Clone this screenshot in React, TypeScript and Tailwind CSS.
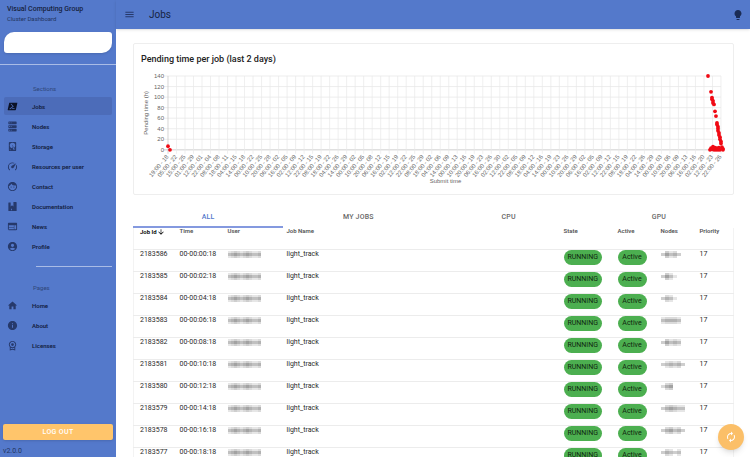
import type { ReactNode } from 'react'
import {
  MdAccountCircle,
  MdArrowDownward,
  MdAutorenew,
  MdFace,
  MdHome,
  MdInfo,
  MdLightbulb,
  MdMenu,
  MdWeb,
} from 'react-icons/md'

function Glyph({ d }: { d: string }) {
  return (
    <svg viewBox="0 0 24 24" fill="currentColor" className="size-full" aria-hidden="true">
      <path d={d} />
    </svg>
  )
}

const GLYPHS = {
  shell:
    'M21.83,4C22.32,4 22.63,4.4 22.5,4.89L19.34,19.11C19.23,19.6 18.75,20 18.26,20H2.17C1.68,20 1.37,19.6 1.5,19.11L4.66,4.89C4.77,4.4 5.25,4 5.74,4H21.83M15.83,16H11.83C11.37,16 11,16.38 11,16.84C11,17.31 11.37,17.69 11.83,17.69H15.83C16.3,17.69 16.68,17.31 16.68,16.84C16.68,16.38 16.3,16 15.83,16M5.78,16.28C5.38,16.56 5.29,17.11 5.57,17.5C5.85,17.92 6.41,18 6.81,17.73C14.16,12.56 14.21,12.5 14.26,12.47C14.44,12.31 14.53,12.09 14.54,11.87C14.55,11.67 14.5,11.5 14.38,11.31L9.46,6.03C9.13,5.67 8.57,5.65 8.21,6C7.85,6.32 7.83,6.88 8.16,7.24L12.31,11.68L5.78,16.28Z',
  server:
    'M4,1H20A1,1 0 0,1 21,2V6A1,1 0 0,1 20,7H4A1,1 0 0,1 3,6V2A1,1 0 0,1 4,1M4,9H20A1,1 0 0,1 21,10V14A1,1 0 0,1 20,15H4A1,1 0 0,1 3,14V10A1,1 0 0,1 4,9M4,17H20A1,1 0 0,1 21,18V22A1,1 0 0,1 20,23H4A1,1 0 0,1 3,22V18A1,1 0 0,1 4,17M9,5H10V3H9V5M9,13H10V11H9V13M9,21H10V19H9V21M5,3V5H7V3H5M5,11V13H7V11H5M5,19V21H7V19H5Z',
  disk: 'M6,2H18A2,2 0 0,1 20,4V20A2,2 0 0,1 18,22H6A2,2 0 0,1 4,20V4A2,2 0 0,1 6,2M12,4A6,6 0 0,0 6,10C6,13.31 8.69,16 12.1,16L11.22,13.77C10.95,13.29 11.11,12.68 11.59,12.4L12.45,11.9C12.93,11.63 13.54,11.79 13.82,12.27L15.74,14.69C17.12,13.59 18,11.9 18,10A6,6 0 0,0 12,4M12,9A1,1 0 0,1 13,10A1,1 0 0,1 12,11A1,1 0 0,1 11,10A1,1 0 0,1 12,9M7,18A1,1 0 0,0 6,19A1,1 0 0,0 7,20A1,1 0 0,0 8,19A1,1 0 0,0 7,18M12.09,13.27L14.58,19.58L17.17,18.08L12.95,12.77L12.09,13.27Z',
  gauge:
    'M12,16A3,3 0 0,1 9,13C9,11.88 9.61,10.9 10.5,10.39L20.21,4.77L14.68,14.35C14.18,15.33 13.17,16 12,16M12,3C13.81,3 15.5,3.5 16.97,4.32L14.87,5.53C14,5.19 13,5 12,5A8,8 0 0,0 4,13C4,15.21 4.89,17.21 6.34,18.65H6.35C6.74,19.04 6.74,19.67 6.35,20.06C5.96,20.45 5.32,20.45 4.93,20.07V20.07C3.12,18.26 2,15.76 2,13A10,10 0 0,1 12,3M22,13C22,15.76 20.88,18.26 19.07,20.07V20.07C18.68,20.45 18.05,20.45 17.66,20.06C17.27,19.67 17.27,19.04 17.66,18.65V18.65C19.11,17.2 20,15.21 20,13C20,12 19.81,11 19.46,10.1L20.67,8C21.5,9.5 22,11.18 22,13Z',
  docs: 'M3,4A1,1 0 0,1 4,3H8V12L11,9L14,12V2H20A1,1 0 0,1 21,3V21A1,1 0 0,1 20,22H4A1,1 0 0,1 3,21V4M9,17V20H11V17H9Z',
  license:
    'M9 10A3.04 3.04 0 0 1 12 7A3.04 3.04 0 0 1 15 10A3.04 3.04 0 0 1 12 13A3.04 3.04 0 0 1 9 10M12 19L16 20V16.92A7.54 7.54 0 0 1 12 18A7.54 7.54 0 0 1 8 16.92V20M12 4A5.78 5.78 0 0 0 7.76 5.74A5.78 5.78 0 0 0 6 10A5.78 5.78 0 0 0 7.76 14.23A5.78 5.78 0 0 0 12 16A5.78 5.78 0 0 0 16.24 14.23A5.78 5.78 0 0 0 18 10A5.78 5.78 0 0 0 16.24 5.74A5.78 5.78 0 0 0 12 4M20 10A8.04 8.04 0 0 1 19.43 12.8A7.84 7.84 0 0 1 18 15.28V23L12 21L6 23V15.28A7.9 7.9 0 0 1 4 10A7.68 7.68 0 0 1 6.33 4.36A7.73 7.73 0 0 1 12 2A7.73 7.73 0 0 1 17.67 4.36A7.68 7.68 0 0 1 20 10Z',
}

type NavItem = { label: string; icon: ReactNode; active?: boolean }

const SECTIONS: NavItem[] = [
  { label: 'Jobs', icon: <Glyph d={GLYPHS.shell} />, active: true },
  { label: 'Nodes', icon: <Glyph d={GLYPHS.server} /> },
  { label: 'Storage', icon: <Glyph d={GLYPHS.disk} /> },
  { label: 'Resources per user', icon: <Glyph d={GLYPHS.gauge} /> },
  { label: 'Contact', icon: <MdFace className="size-full" /> },
  { label: 'Documentation', icon: <Glyph d={GLYPHS.docs} /> },
  { label: 'News', icon: <MdWeb className="size-full" /> },
  { label: 'Profile', icon: <MdAccountCircle className="size-full" /> },
]

const PAGES: NavItem[] = [
  { label: 'Home', icon: <MdHome className="size-full" /> },
  { label: 'About', icon: <MdInfo className="size-full" /> },
  { label: 'Licenses', icon: <Glyph d={GLYPHS.license} /> },
]

const TABS = ['ALL', 'MY JOBS', 'CPU', 'GPU']

// mask: grey levels of the hidden node names
const JOBS = [
  { id: 2183586, time: '00-00:00:18', mask: '36453' },
  { id: 2183585, time: '00-00:02:18', mask: '3641' },
  { id: 2183584, time: '00-00:04:18', mask: '3541' },
  { id: 2183583, time: '00-00:06:18', mask: '45554' },
  { id: 2183582, time: '00-00:08:18', mask: '36454' },
  { id: 2183581, time: '00-00:10:18', mask: '345453' },
  { id: 2183580, time: '00-00:12:18', mask: '256' },
  { id: 2183579, time: '00-00:14:18', mask: '356544' },
  { id: 2183578, time: '00-00:16:18', mask: '356453' },
  { id: 2183577, time: '00-00:18:18', mask: '35434' },
]

const SHADES = ['#ffffff', '#e6e6e6', '#dadada', '#cecece', '#c0c0c0', '#b2b2b2', '#a2a2a2']

function Mask({ levels, unit }: { levels: string; unit: number }) {
  const cells = levels.split('').map(Number)
  return (
    <svg width={cells.length * unit} height="7" className="block" aria-hidden="true">
      {cells.map((n, i) => (
        <g key={i}>
          <rect x={i * unit} y="0" width={unit} height="2" fill={SHADES[Math.max(n - 3, 0)]} />
          <rect x={i * unit} y="2" width={unit} height="3" fill={SHADES[n]} />
          <rect x={i * unit} y="5" width={unit} height="2" fill={SHADES[Math.max(n - 3, 0)]} />
        </g>
      ))}
    </svg>
  )
}

const TICKS = Array.from({ length: 66 }, (_, i) => {
  const hours = i * 82 + (i > 3 ? 1 : 0)
  const d = new Date(Date.UTC(2021, 2, 18, 19 + hours))
  const pad = (n: number) => String(n).padStart(2, '0')
  return `${pad(d.getUTCHours())}:00 - ${pad(d.getUTCDate())}`
})

const LEFT = 28
const RIGHT = 582
const TOP = 8
const BOTTOM = 82
const tickX = (i: number) => LEFT + (i * (RIGHT - LEFT)) / 65
const valueY = (v: number) => BOTTOM - (v * (BOTTOM - TOP)) / 140

const POINTS: [number, number][] = [
  [28, 7], [30, 0], [569, 140], [572, 110],
  [573, 99], [573, 96], [574, 93], [574, 89], [575, 86],
  [576, 73], [577, 64],
  [578, 51], [578, 48], [579, 44], [579, 40], [579, 36], [580, 32], [580, 28], [581, 24], [581, 20], [582, 16], [582, 12],
  [571, 0], [572, 3], [573, 1], [574, 6], [575, 0], [576, 4], [577, 0], [578, 3], [579, 0], [580, 4], [581, 0], [583, 5], [584, 2], [584, 0],
]

function PendingChart() {
  return (
    <svg
      viewBox="0 0 590 120"
      className="mt-[2px] block w-full font-['Liberation_Sans',sans-serif] text-[6px]"
      role="img"
      aria-label="Pending time per job"
    >
      {[0, 20, 40, 60, 80, 100, 120, 140].map(v => (
        <g key={v}>
          <line x1={LEFT - 4} x2={RIGHT} y1={valueY(v)} y2={valueY(v)} stroke={v ? '#e8e8e8' : '#c4c4c4'} strokeWidth="0.8" />
          <text x={LEFT - 4} y={valueY(v) + 2} textAnchor="end" fill="#666">{v}</text>
        </g>
      ))}
      {TICKS.map((label, i) => (
        <g key={i}>
          <line x1={tickX(i)} x2={tickX(i)} y1={TOP} y2={BOTTOM + 4} stroke={i ? '#e8e8e8' : '#c4c4c4'} strokeWidth="0.7" />
          <text
            transform={`translate(${tickX(i) + 1} ${BOTTOM + 7}) rotate(-50)`}
            textAnchor="end"
            fill="#666"
          >
            {label}
          </text>
        </g>
      ))}
      {POINTS.map(([x, v], i) => (
        <circle key={i} cx={x} cy={valueY(v)} r="1.9" fill="#f00a14" />
      ))}
      <text transform="translate(8 45) rotate(-90)" textAnchor="middle" fill="#666">Pending time (h)</text>
      <text x="306" y="115" textAnchor="middle" fill="#666">Submit time</text>
    </svg>
  )
}

function NavList({ title, items }: { title: string; items: NavItem[] }) {
  return (
    <div>
      <h2 className="flex h-[18px] items-center pl-[29px] text-[6px] text-[#2f4678]">{title}</h2>
      <ul className="flex flex-col gap-[2px]">
        {items.map(item => (
          <li key={item.label}>
            <a
              href="#"
              className={`flex h-[18px] items-center gap-[14px] rounded-xs pl-[3px] text-[6px] font-semibold text-[#13203f] ${item.active ? 'bg-[#4c6cb9]' : ''}`}
            >
              <span className={`size-[11px] ${item.active ? 'text-[#0b1226]' : 'text-[#26396b]'}`}>{item.icon}</span>
              {item.label}
            </a>
          </li>
        ))}
      </ul>
    </div>
  )
}

function Sidebar() {
  return (
    <aside className="flex w-[116px] shrink-0 flex-col bg-[#5479cb]">
      <div className="h-[65px] border-b border-[#a9bce6] px-1 pt-1">
        <p className="pl-[3px] text-[7px] leading-[10px] font-medium text-[#16233f]">Visual Computing Group</p>
        <p className="pl-[3px] text-[6px] leading-[9px] text-[#22345f]">Cluster Dashboard</p>
        <div className="mt-[9px] h-[21px] rounded-tl-[10px] rounded-tr-[3px] rounded-br-[10px] rounded-bl-[3px] bg-white shadow" />
      </div>
      <nav className="flex flex-col px-1 pt-[14px]">
        <NavList title="Sections" items={SECTIONS} />
        <hr className="mt-[11px] mb-[11px] ml-8 border-[#a9bce6]" />
        <NavList title="Pages" items={PAGES} />
      </nav>
      <div className="mt-auto px-[3px]">
        <button className="h-4 w-full rounded-xs bg-[#ffc56b] text-[7px] font-medium tracking-wider text-white shadow">
          LOG OUT
        </button>
        <p className="pt-[7px] pb-[2px] text-[7px] leading-[7px] text-[#22345f]">v2.0.0</p>
      </div>
    </aside>
  )
}

function Chip({ children }: { children: ReactNode }) {
  return (
    <span className="inline-flex h-[15px] min-w-[29px] items-center justify-center rounded-full bg-[#4caf50] px-1 text-[7px] text-[#10260f]">
      {children}
    </span>
  )
}

function JobsTable() {
  return (
    <table className="w-full table-fixed border-x border-[#f3f3f3] text-left text-[7px] text-[#2b2b2b]">
      <colgroup>
        <col className="w-10" />
        <col className="w-12" />
        <col className="w-[59px]" />
        <col />
        <col className="w-[54px]" />
        <col className="w-[43px]" />
        <col className="w-[39px]" />
        <col className="w-10" />
      </colgroup>
      <thead>
        <tr className="h-[21px] align-top text-[6px] leading-[6px] whitespace-nowrap text-[#555] *:pl-[6px] *:font-semibold">
          <th className="text-black">
            <span className="flex items-center">
              Job Id <MdArrowDownward className="size-2" />
            </span>
          </th>
          <th>Time</th>
          <th>User</th>
          <th>Job Name</th>
          <th>State</th>
          <th>Active</th>
          <th>Nodes</th>
          <th>Priority</th>
        </tr>
      </thead>
      <tbody>
        {JOBS.map(job => (
          <tr key={job.id} className="h-[22px] border-t border-[#ececec] align-top leading-[9px] *:pl-[6px]">
            <td>{job.id}</td>
            <td>{job.time}</td>
            <td className="pt-px"><Mask levels="45654565445" unit={3} /></td>
            <td>light_track</td>
            <td><Chip>RUNNING</Chip></td>
            <td><Chip>Active</Chip></td>
            <td className="pt-px"><Mask levels={job.mask} unit={4} /></td>
            <td>17</td>
          </tr>
        ))}
      </tbody>
    </table>
  )
}

export default function App() {
  return (
    <div className="relative flex h-screen overflow-hidden bg-white font-[Roboto,sans-serif]">
      <Sidebar />
      <div className="flex min-w-0 flex-1 flex-col">
        <header className="flex h-[29px] shrink-0 items-center bg-[#5479cb] pr-[6px] pl-2 text-[#16233f] shadow">
          <button aria-label="Menu" className="text-[#26396b]"><MdMenu className="size-[11px]" /></button>
          <h1 className="ml-[14px] text-[10px]">Jobs</h1>
          <button aria-label="Toggle theme" className="ml-auto text-[#1b2c55]"><MdLightbulb className="size-3" /></button>
        </header>
        <main className="min-h-0 flex-1 overflow-hidden pt-[14px] pr-4 pl-[17px]">
          <section className="h-[152px] rounded-xs border border-[#eeeeee] pt-2 pr-1 pl-[6px]">
            <h2 className="pl-px text-[9px] leading-[14px] font-medium text-[#222]">
              Pending time per job (last 2 days)
            </h2>
            <PendingChart />
          </section>
          <div className="mt-[10px] flex" role="tablist">
            {TABS.map((tab, i) => (
              <button
                key={tab}
                role="tab"
                aria-selected={i === 0}
                className={`h-[23px] flex-1 border-b-2 pt-[3px] text-[7px] font-medium tracking-wide ${i === 0 ? 'border-[#8499df] text-[#5479cc]' : 'border-transparent text-[#666]'}`}
              >
                {tab}
              </button>
            ))}
          </div>
          <JobsTable />
        </main>
      </div>
      <button
        aria-label="Refresh"
        className="absolute right-[6px] bottom-[7px] flex size-[26px] items-center justify-center rounded-full bg-[#fbbf68] text-white shadow-md"
      >
        <MdAutorenew className="size-3" />
      </button>
    </div>
  )
}
